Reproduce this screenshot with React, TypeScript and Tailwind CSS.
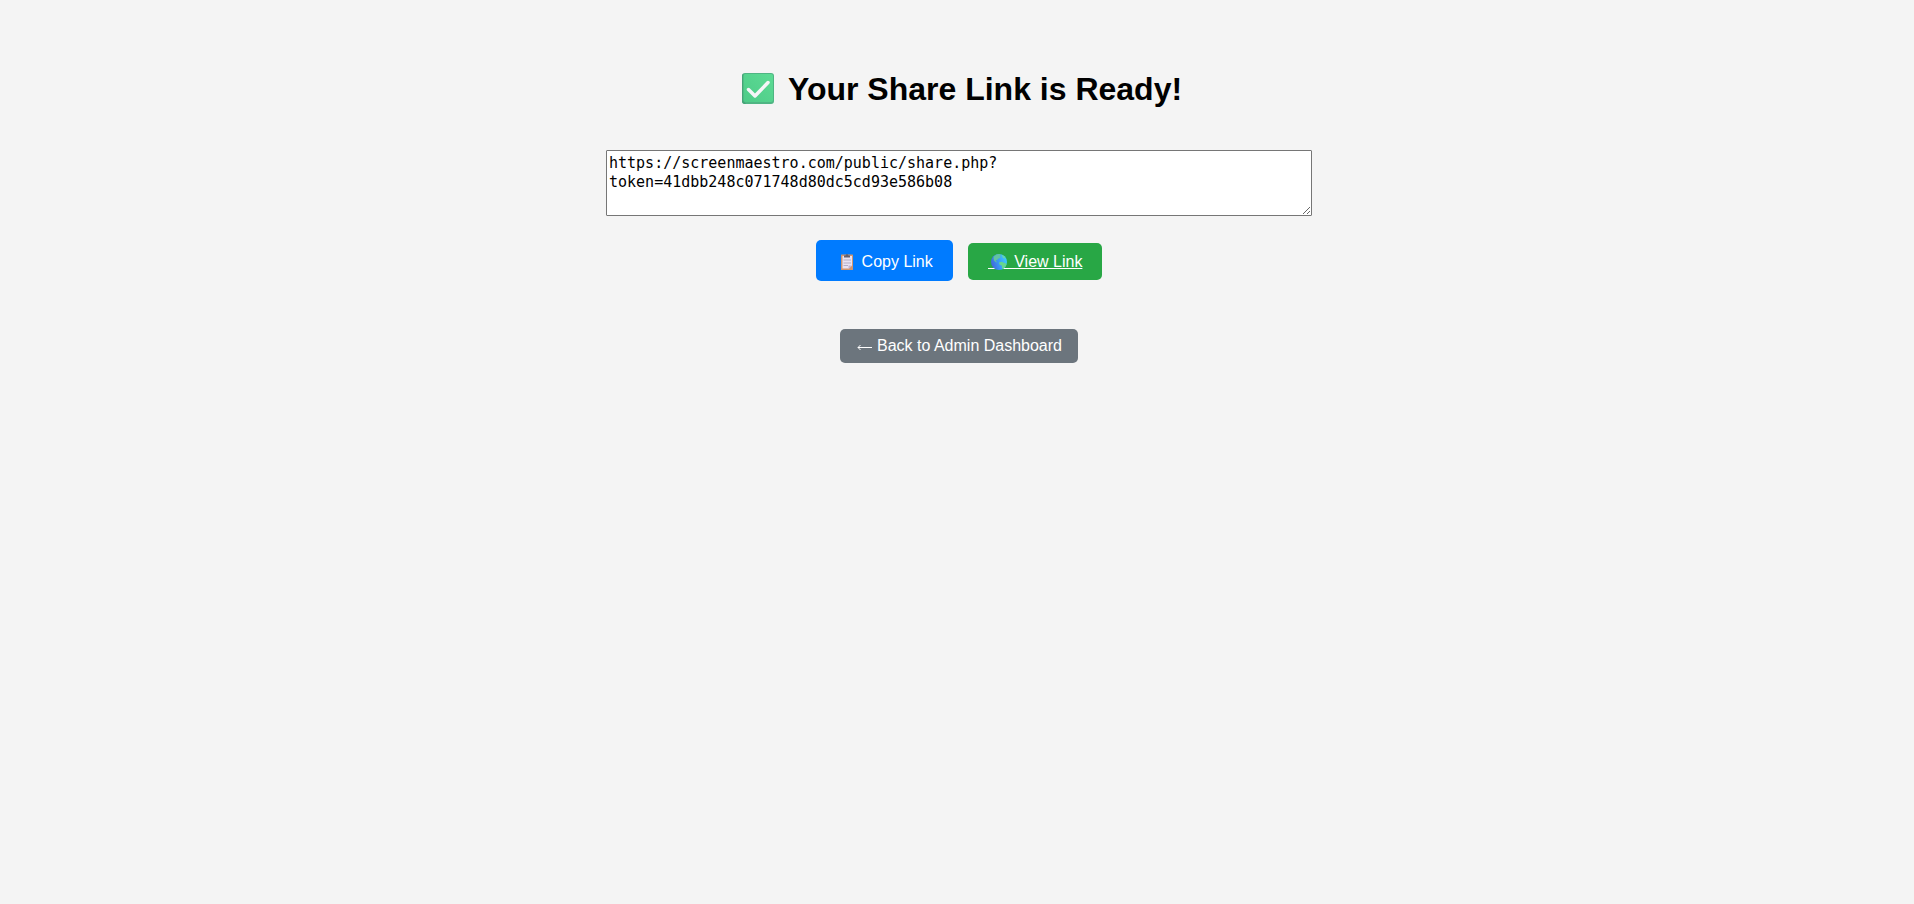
const shareLink =
  "https://screenmaestro.com/public/share.php?token=41dbb248c071748d80dc5cd93e586b08";

function CheckIcon() {
  return (
    <svg className="w-11 h-9 shrink-0" viewBox="1 0 44 36" aria-hidden="true">
      <defs>
        <linearGradient id="check-face" x1="0" y1="1" x2="1" y2="0">
          <stop offset="0" stopColor="#4ecb88" />
          <stop offset="1" stopColor="#5cdb94" />
        </linearGradient>
      </defs>
      <rect x="7" y="2" width="32" height="31" rx="3" fill="#4fb583" />
      <path d="M7 5v25q0 3 3 3h1L8.500 30V3Q7 3 7 5z" fill="#45a377" />
      <rect x="8.500" y="3" width="29.500" height="28" rx="2" fill="url(#check-face)" />
      <path d="M13.500 18.500l6.500 6.500 13-13.500" fill="none" stroke="#f5f5f8" strokeWidth="3.500" strokeLinecap="round" strokeLinejoin="round" />
    </svg>
  );
}

function ClipboardIcon() {
  return (
    <svg className="w-[22px] h-[18px] shrink-0" viewBox="0 0 22 18" aria-hidden="true">
      <rect x="5" y="1.500" width="12" height="15.500" rx="0.6" fill="#d0956f" />
      <path d="M6.500 3h9.500v9.500l-3 3H6.500z" fill="#e9e2f2" />
      <path d="M12.500 16v-3.500h3.500z" fill="#c4b2cf" />
      <path d="M7.500 7h7.500M7.500 10h7.500M7.500 12.500h4.500" stroke="#b3adc6" strokeWidth="1" />
      <path d="M8 4.500V2.500h1.500Q10 1 11 1t1.500 1.500H14v2z" fill="#636070" />
    </svg>
  );
}

function GlobeIcon() {
  return (
    <svg className="w-[22px] h-[18px] shrink-0" viewBox="0 0 22 18" aria-hidden="true">
      <defs>
        <linearGradient id="globe-sea" x1="0" y1="0.6" x2="1" y2="0.3">
          <stop offset="0" stopColor="#4068d8" />
          <stop offset="0.45" stopColor="#3b97f5" />
          <stop offset="1" stopColor="#3fcdff" />
        </linearGradient>
      </defs>
      <circle cx="11" cy="9" r="8" fill="url(#globe-sea)" />
      <path d="M6 3.200Q8 1.200 11.500 1l1.500 1-1.500 1.500 1.500 1-2.500 1-1.500 1.500-1.500.5 1.500 1.500-.8.5-2.200-2-.5-2.500z" fill="#62c4a0" />
      <path d="M11 9.500l2.500-.8 3 1.300 2 .7-1 2.800-2.500 2.500-1-.7v-2.500l-2.500-1.300z" fill="#66d68e" />
      <path d="M13.500 2l2.500 1 1.500 2-1.500.5-1.500-1.500z" fill="#6ad8a4" />
    </svg>
  );
}

function ArrowIcon() {
  return (
    <svg className="w-4 h-[18px] shrink-0" viewBox="0 0 16 18" fill="none" stroke="currentColor" strokeWidth="1" aria-hidden="true">
      <path d="M16 10.500H2M4.500 8L2 10.500 4.500 13" />
    </svg>
  );
}

export default function App() {
  const copyLink = () => navigator.clipboard?.writeText(shareLink);

  return (
    <main className="min-h-screen bg-[#f4f4f4] pt-[71px] pb-10 pl-1 font-['Liberation_Sans',Arial,sans-serif] text-base text-black">
      <div className="mx-auto flex w-full max-w-[706px] flex-col items-center">
        <h1 className="flex items-center gap-2 text-[32px] leading-9 font-bold">
          <CheckIcon />
          Your Share Link is Ready!
        </h1>

        <textarea
          readOnly
          aria-label="Share link"
          defaultValue={shareLink}
          className="mt-[43px] block h-[66px] w-full resize rounded-[1px] border border-[#767676] bg-white px-[2px] py-[3px] font-['DejaVu_Sans_Mono',monospace] text-[15px] leading-[19px]"
        />

        {/* Link actions */}
        <div className="mt-6 flex items-baseline gap-[15px] text-white">
          <button
            type="button"
            onClick={copyLink}
            className="flex cursor-pointer items-center gap-1 rounded-[5px] bg-[#007bff] px-5 pt-3 pb-[10px] leading-[19px]"
          >
            <ClipboardIcon />
            Copy Link
          </button>
          <a
            href={shareLink}
            className="flex items-center rounded-[5px] bg-[#28a745] px-5 py-[9px] leading-[19px] underline"
          >
            {/* the underline runs on below the globe */}
            <span className="relative flex">
              <span className="absolute inset-x-0 bottom-[2px] h-px bg-white" />
              <span className="relative flex">
                <GlobeIcon />
              </span>
            </span>
            <span className="whitespace-pre"> View Link</span>
          </a>
        </div>

        <a
          href="#dashboard"
          className="mt-12 flex items-center gap-[5px] rounded-[5px] bg-[#6c757d] px-4 py-2 leading-[18px] text-white"
        >
          <ArrowIcon />
          Back to Admin Dashboard
        </a>
      </div>
    </main>
  );
}
